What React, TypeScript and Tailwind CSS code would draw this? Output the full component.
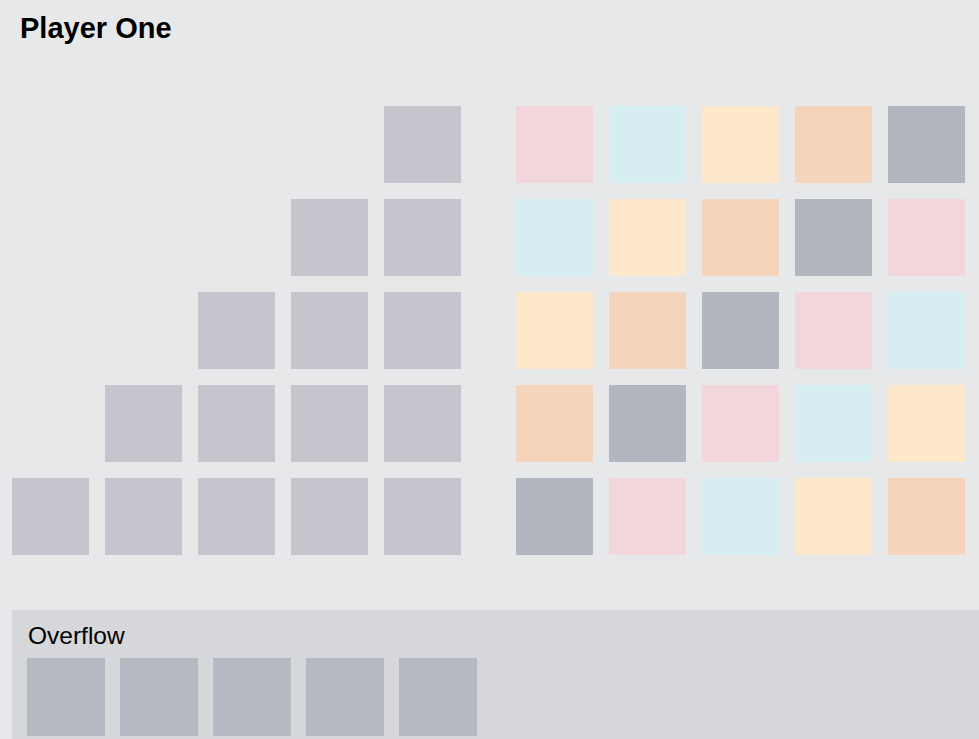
const WALL_COLORS = ['bg-[#f3d6dc]', 'bg-[#d6eef2]', 'bg-[#fee8cb]', 'bg-[#f5d4bb]', 'bg-[#b3b6bf]']

function Tile({ className }: { className: string }) {
  return <div className={`h-[77px] w-[77px] shrink-0 ${className}`} />
}

export default function App() {
  const rows = [0, 1, 2, 3, 4]

  return (
    <div className="h-[739px] w-[979px] overflow-hidden bg-[#e7e8ea] font-['Liberation_Sans',Arial,sans-serif] text-black">
      <div className="w-[1100px] pt-3 pl-3">
        <h1 className="pl-2 text-[29px] leading-[33px] font-bold">Player One</h1>

        <div className="mt-[61px] flex gap-[55px]">
          {/* pattern lines */}
          <div className="flex flex-col gap-4">
            {rows.map((r) => (
              <div key={r} className="flex w-[449px] justify-end gap-4">
                {Array.from({ length: r + 1 }).map((_, i) => (
                  <Tile key={i} className="bg-[#c5c6cd]" />
                ))}
              </div>
            ))}
          </div>

          {/* wall */}
          <div className="flex flex-col gap-4">
            {rows.map((r) => (
              <div key={r} className="flex gap-4">
                {rows.map((c) => (
                  <Tile key={c} className={WALL_COLORS[(r + c) % 5]} />
                ))}
              </div>
            ))}
          </div>
        </div>

        <div className="mt-[55px] bg-[#d6d7da] pt-3 pb-4 pl-[15px]">
          <p className="pl-px text-[24.5px] leading-[28px]">Overflow</p>
          <div className="mt-2 flex gap-[15px]">
            {[0, 1, 2, 3, 4].map((i) => (
              <div key={i} className="h-[78px] w-[78px] bg-[#b6b9c1]" />
            ))}
          </div>
        </div>
      </div>
    </div>
  )
}
